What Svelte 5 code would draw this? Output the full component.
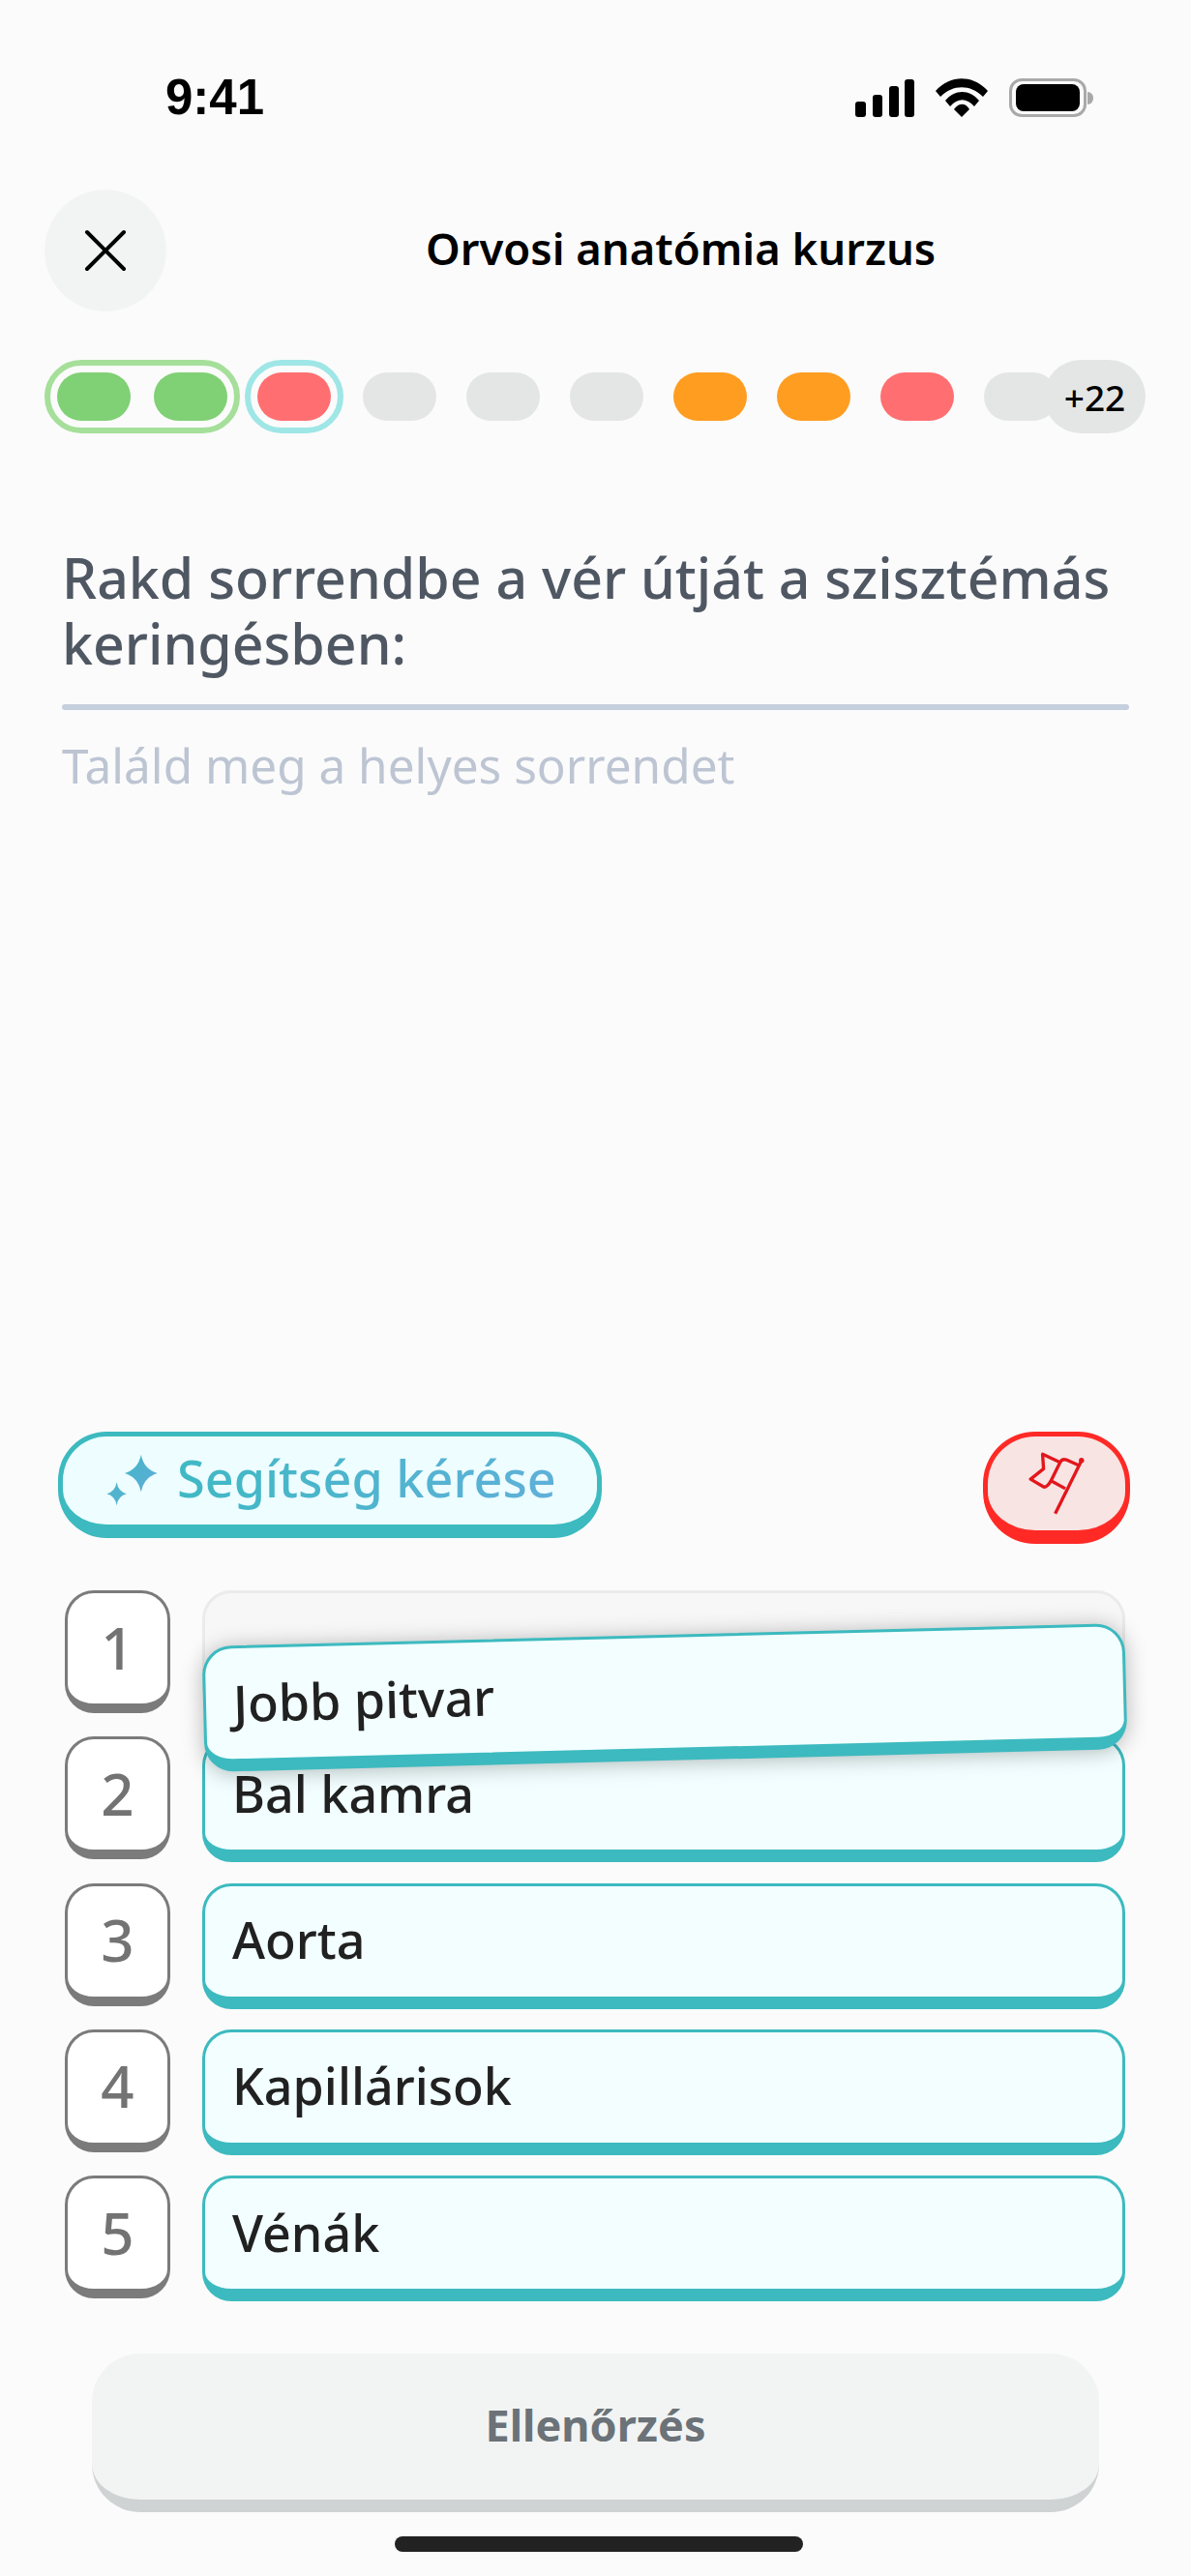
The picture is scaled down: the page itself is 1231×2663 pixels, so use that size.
<script lang="ts">
  const answers = ['Bal kamra', 'Aorta', 'Kapillárisok', 'Vénák'];
  const pills = ['grey', 'grey', 'grey', 'orange', 'orange', 'red', 'grey'];
</script>

<div class="page">
  <div class="status">
    <span class="time">9:41</span>
    <div class="status-icons">
      <svg class="signal" width="61" height="39" viewBox="0 0 61 39">
        <rect x="0" y="23" width="11" height="16" rx="3" />
        <rect x="18" y="16" width="10" height="23" rx="3" />
        <rect x="35" y="7" width="10" height="32" rx="3" />
        <rect x="51" y="0" width="10" height="39" rx="3" />
      </svg>
      <svg class="wifi" width="55" height="40" viewBox="0 0 55 40">
        <path d="M0 13C15-4 39-4 54 13L49 19C36 6 18 6 5 19Z" />
        <path d="M10 23C20 11 35 11 45 23L40 29C32 20 23 20 15 29Z" />
        <path d="M19 32C24 25 31 25 35 32L27 40Z" />
      </svg>
      <div class="battery"><div class="charge"></div></div>
      <div class="nub"></div>
    </div>
  </div>

  <header class="header">
    <button class="close" aria-label="Bezárás">
      <svg width="44" height="44" viewBox="0 0 44 44" fill="none" stroke="#000" stroke-width="4" stroke-linecap="round">
        <path d="M3 3L41 41M41 3L3 41" />
      </svg>
    </button>
    <h1>Orvosi anatómia kurzus</h1>
  </header>

  <div class="progress">
    <div class="ring green">
      <span class="pill correct"></span>
      <span class="pill correct"></span>
    </div>
    <div class="ring cyan"><span class="pill red"></span></div>
    <div class="rest">
      {#each pills as kind}
        <span class="pill {kind}"></span>
      {/each}
      <span class="more">+22</span>
    </div>
  </div>

  <section class="question">
    <h2>Rakd sorrendbe a vér útját a szisztémás keringésben:</h2>
    <div class="rule"></div>
    <p>Találd meg a helyes sorrendet</p>
  </section>

  <div class="tools">
    <button class="help">
      <svg width="53" height="54" viewBox="208 130 160 162">
        <defs>
          <linearGradient id="spark" x1="0" y1="0" x2="1" y2="1">
            <stop offset="0" stop-color="#3fb8c6" />
            <stop offset="1" stop-color="#62abd8" />
          </linearGradient>
        </defs>
        <path fill="url(#spark)" d="M316 132Q325 178 367 190Q325 202 316 248Q307 202 265 190Q307 178 316 132Z" />
        <path fill="#52b3ce" d="M240 218Q245 248 271 254Q245 260 240 290Q235 260 209 254Q235 248 240 218Z" />
      </svg>
      <span>Segítség kérése</span>
    </button>
    <button class="flag" aria-label="Hiba jelentése">
      <svg width="64" height="67" viewBox="180 120 190 200" fill="none" stroke="#e3161b" stroke-width="10" stroke-linejoin="round">
        <path d="M271 313L352 150" />
        <circle cx="352" cy="149" r="8" fill="#e3161b" stroke="none" />
        <path d="M345 165L305 147Q292 143 286 155L258 212L302 236" />
        <path d="M286 155L232 130L235 175L195 207L236 231Q246 232 258 212" />
      </svg>
    </button>
  </div>

  <div class="list">
    <div class="row">
      <div class="num">1</div>
      <div class="slot">
        <div class="card empty"></div>
        <div class="card dragged">Jobb pitvar</div>
      </div>
    </div>
    {#each answers as answer, i}
      <div class="row">
        <div class="num">{i + 2}</div>
        <div class="slot"><div class="card">{answer}</div></div>
      </div>
    {/each}
  </div>

  <button class="check">Ellenőrzés</button>
  <div class="home"></div>
</div>

<style>
  :global(body) {
    margin: 0;
    background: #fbfbfb;
  }
  .page {
    width: 1231px;
    height: 2663px;
    overflow: hidden;
    display: flex;
    flex-direction: column;
    box-sizing: border-box;
    padding-bottom: 25px;
    background: #fbfbfb;
    font-family: "Noto Sans", sans-serif;
  }
  button {
    font-family: inherit;
    padding: 0;
    box-sizing: border-box;
    cursor: pointer;
  }
  .status {
    height: 121px;
    padding: 0 101px 0 171px;
    display: flex;
    justify-content: space-between;
    align-items: flex-end;
  }
  .time {
    font: 700 51px/1 "Liberation Sans", sans-serif;
    color: #000;
    margin-bottom: -5px;
  }
  .status-icons {
    display: flex;
    align-items: center;
    height: 40px;
  }
  .signal, .wifi {
    fill: #000;
    display: block;
  }
  .wifi {
    margin-left: 22px;
  }
  .battery {
    margin-left: 21px;
    width: 80px;
    height: 40px;
    box-sizing: border-box;
    border: 3px solid #a9a9a9;
    border-radius: 13px;
    padding: 3px 4px;
  }
  .charge {
    height: 100%;
    background: #000;
    border-radius: 8px;
  }
  .nub {
    width: 6px;
    height: 13px;
    margin-left: 1px;
    background: #a9a9a9;
    border-radius: 0 6px 6px 0;
  }
  .header {
    margin-top: 74px;
    padding-left: 46px;
    display: flex;
    align-items: center;
    height: 127px;
  }
  .close {
    width: 126px;
    height: 126px;
    border: 0;
    border-radius: 50%;
    background: #f2f4f3;
    display: flex;
    align-items: center;
    justify-content: center;
  }
  h1 {
    margin: 0 0 3px 268px;
    font-size: 45.4px;
    font-weight: 600;
    line-height: 1;
    color: #000;
    white-space: nowrap;
  }
  .progress {
    margin-top: 50px;
    padding-left: 46px;
    display: flex;
    align-items: center;
    gap: 5px;
    height: 76px;
  }
  .ring {
    box-sizing: border-box;
    height: 76px;
    padding: 7px;
    border: 6px solid;
    border-radius: 38px;
    display: flex;
    align-items: center;
    gap: 24px;
  }
  .green { border-color: #a5df9a; }
  .cyan { border-color: #9fe6e6; }
  .pill {
    display: block;
    flex: none;
    width: 76px;
    height: 50px;
    border-radius: 25px;
  }
  .correct { background: #80d075; }
  .red { background: #ff6f71; }
  .grey { background: #e4e6e5; }
  .orange { background: #ff9d21; }
  .rest {
    margin-left: 15px;
    display: flex;
    align-items: center;
    gap: 31px;
  }
  .more {
    margin-left: -45px;
    width: 105px;
    height: 76px;
    border-radius: 38px;
    background: #e4e6e5;
    position: relative;
    display: flex;
    align-items: center;
    justify-content: center;
    font-size: 37px;
    font-weight: 500;
    color: #000;
  }
  .question {
    margin-top: 115px;
    padding: 0 64px 0 64px;
  }
  h2 {
    margin: 0;
    font-size: 57.2px;
    font-weight: 500;
    line-height: 68px;
    color: #4f5763;
  }
  .rule {
    margin-top: 29px;
    height: 6px;
    border-radius: 3px;
    background: #c6cfdd;
  }
  .question p {
    margin: 27px 0 0;
    font-size: 49.5px;
    line-height: 60px;
    color: #bdc5d3;
  }
  .tools {
    margin-top: auto;
    padding: 0 63px 0 60px;
    display: flex;
    justify-content: space-between;
    align-items: flex-start;
  }
  .help {
    width: 562px;
    height: 110px;
    background: #eefdff;
    border: solid #3cbabf;
    border-width: 5px 5px 14px;
    border-radius: 50px;
    display: flex;
    align-items: center;
    gap: 20px;
    padding-left: 45px;
  }
  .help svg {
    margin-bottom: 2px;
  }
  .help span {
    font-size: 52.2px;
    font-weight: 500;
    white-space: nowrap;
    margin-bottom: 6px;
    background: linear-gradient(90deg, #3fb9c4, #5fb0d8);
    -webkit-background-clip: text;
    background-clip: text;
    color: transparent;
  }
  .flag {
    width: 152px;
    height: 116px;
    background: #f7e4e3;
    border: solid #ff2a26;
    border-width: 5px 5px 14px;
    border-radius: 54px;
    display: flex;
    align-items: center;
    justify-content: center;
  }
  .list {
    margin-top: 48px;
    padding: 0 68px 0 67px;
    display: flex;
    flex-direction: column;
    gap: 21.25px;
  }
  .row {
    display: flex;
    gap: 33px;
    height: 130px;
    align-items: flex-start;
  }
  .num {
    flex: none;
    box-sizing: border-box;
    width: 109px;
    height: 127px;
    background: #fff;
    border: solid #7b7b7b;
    border-width: 3px 3px 10px;
    border-radius: 30px;
    display: flex;
    align-items: center;
    justify-content: center;
    padding-bottom: 3px;
    font-size: 60px;
    font-weight: 500;
    color: #737373;
  }
  .slot {
    flex: 1;
    position: relative;
    height: 130px;
  }
  .card {
    box-sizing: border-box;
    height: 130px;
    background: #f2feff;
    border: solid #3cbabf;
    border-width: 3px 3px 13px;
    border-radius: 30px;
    padding: 0 0 4px 28px;
    display: flex;
    align-items: center;
    font-size: 52px;
    font-weight: 500;
    color: #212121;
  }
  .card.empty {
    background: #f7f7f7;
    border-color: #ebebeb;
    border-width: 3px;
  }
  .dragged {
    position: absolute;
    top: 46px;
    left: 1px;
    width: 100%;
    z-index: 2;
    transform: rotate(-1.44deg);
    box-shadow: 0 2px 22px rgba(0, 0, 0, 0.28);
  }
  .check {
    margin: 54px 0 0 95px;
    width: 1041px;
    height: 164px;
    flex: none;
    background: #f2f4f3;
    border: 0;
    border-bottom: 13px solid #cfd3d3;
    border-radius: 50px;
    padding-bottom: 4px;
    font-size: 45px;
    font-weight: 700;
    color: #6b7278;
  }
  .home {
    margin: 25px 0 0 408px;
    width: 422px;
    height: 16px;
    flex: none;
    border-radius: 8px;
    background: #222;
  }
</style>
